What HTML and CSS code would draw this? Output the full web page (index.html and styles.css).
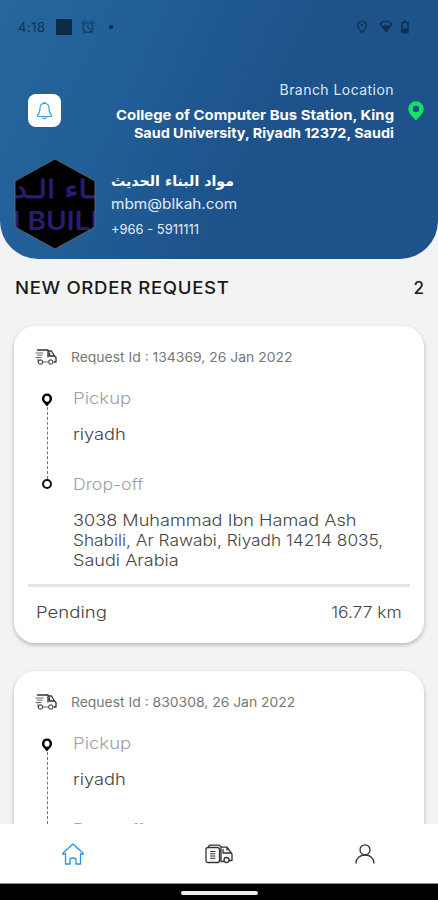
FILE: index.html
```html
<!DOCTYPE html>
<html lang="en">
<head>
<meta charset="utf-8">
<meta name="viewport" content="width=device-width, initial-scale=1">
<title>New order request</title>
<link rel="stylesheet" href="styles.css">
</head>
<body>
<svg class="defs" aria-hidden="true">
  <symbol id="truck" viewBox="0 0 22 18">
    <g fill="none" stroke="currentColor" stroke-linecap="round" stroke-linejoin="round">
      <path stroke-width="1.300" d="M2.500 2H13V9M13 3H16.500L19.500 8L21 9.500V14H19M14.500 5V8H19"/>
      <path stroke-width="1" opacity=".75" d="M1 5H8M2.500 7.200H7M1 9.500H6M3 11V14M8 14H13"/>
      <g stroke-width="1.100" opacity=".8"><circle cx="5.500" cy="14" r="2.100"/><circle cx="15.800" cy="14" r="2.100"/></g>
    </g>
  </symbol>
  <symbol id="pin" viewBox="0 0 12 14">
    <path fill="currentColor" fill-rule="evenodd" d="M6 .5A5 5 0 0 0 .9 5.600C.9 9 4 10.800 6 13.500C8 10.800 11.100 9 11.100 5.600A5 5 0 0 0 6 .5ZM6 2.800C7.600 2.800 8.600 4 8.600 5.700S7.500 8.700 6 8.700S3.400 7.400 3.400 5.700S4.400 2.800 6 2.800Z"/>
  </symbol>
</svg>
<div class="app">
  <header class="header">
    <div class="status">
      <span class="time">4:18</span>
      <span class="square"></span>
      <svg class="alarm" viewBox="0 0 14 14" fill="none" stroke="currentColor" stroke-width="1.200" stroke-linecap="round"><circle cx="7" cy="7.500" r="5"/><path d="M1 3.500L3.500 1M13 3.500L10.500 1M7 5V8L9 9M3.500 11.500L2.500 13M10.500 11.500L11.500 13"/></svg>
      <span class="dot"></span>
      <svg class="loc" viewBox="0 0 10 14" fill="none" stroke="currentColor" stroke-width="1.200"><path d="M5 1C2.500 1 .8 2.700 .8 5C.8 8 5 12.500 5 12.500S9.200 8 9.200 5C9.200 2.700 7.500 1 5 1Z"/><circle cx="5" cy="5" r="1.300" fill="currentColor" stroke="none"/></svg>
      <svg class="wifi" viewBox="0 0 14 13"><path d="M1 4C4 .6 10 .6 13 4L7 11.500Z" fill="none" stroke="currentColor" stroke-width="1.300"/><path d="M3 6.400Q7 4 11 6.400L7 11.800Z" fill="currentColor"/></svg>
      <svg class="battery" viewBox="0 0 8 14"><path d="M1 2.500H7V12.500H1Z" fill="none" stroke="currentColor" stroke-width="1.400"/><path d="M2.500 .5H5.500V2.500H2.500ZM1 8.500H7V13H1Z" fill="currentColor"/></svg>
    </div>
    <div class="branch">
      <span class="bell"><svg viewBox="0 0 18 20" fill="none" stroke="#3c9ddb" stroke-width="1.200" stroke-linecap="round" stroke-linejoin="round"><path d="M9 2.500C5.500 2.500 4.200 5 4.200 7.800C4.200 11.500 3.700 13 1.500 15C1 16 1.500 16.300 2.500 16.300H15.500C16.500 16.300 17 16 16.500 15C14.300 13 13.800 11.500 13.800 7.800C13.800 5 12.500 2.500 9 2.500Z"/><path d="M8.300 1.500H9.700M7 17.500Q9 20 11 17.500"/></svg></span>
      <div class="where">
        <div class="label">Branch Location</div>
        <div class="place"><span class="p1">College of Computer Bus Station, King</span><br><span class="p2">Saud University, Riyadh 12372, Saudi</span></div>
      </div>
      <svg class="green" viewBox="0 0 16 20"><path fill="#16e163" fill-rule="evenodd" d="M8 .3A7.600 7.600 0 0 0 .3 8C.3 13 5.500 16 8 19.700C10.500 16 15.700 13 15.700 8A7.600 7.600 0 0 0 8 .3ZM8 4.700A3.200 3.200 0 1 1 8 11.100A3.200 3.200 0 1 1 8 4.700Z"/></svg>
    </div>
    <div class="company">
      <svg class="logo" viewBox="0 0 82 92">
        <defs><clipPath id="hex"><path d="M41 1L81 23V69L41 91L1 69V23Z"/></clipPath></defs>
        <path d="M41 1L81 23V69L41 91L1 69V23Z" fill="#000"/>
        <g clip-path="url(#hex)" fill="#2b1c72">
          <text class="logo-ar" x="41" y="40" text-anchor="middle" textLength="82" lengthAdjust="spacingAndGlyphs">ـاء الـد</text>
          <text class="logo-en" x="-15" y="72" textLength="112" lengthAdjust="spacingAndGlyphs">N BUILD</text>
        </g>
        <path d="M41 1L81 23V69L41 91L1 69V23Z" fill="none" stroke="#5a6470" stroke-width="1"/>
      </svg>
      <div class="contact">
        <div class="name" lang="ar" dir="rtl">مواد البناء الحديث</div>
        <div class="mail">mbm@blkah.com</div>
        <div class="phone">+966 - 5911111</div>
      </div>
    </div>
  </header>
  <main class="content">
    <div class="title"><h1>NEW ORDER REQUEST</h1><span>2</span></div>
    <article class="card">
      <div class="request"><svg class="truck"><use href="#truck"/></svg><span>Request Id : 134369, 26 Jan 2022</span></div>
      <div class="route">
        <div class="track"><svg class="pin"><use href="#pin"/></svg><i class="line"></i><i class="end"></i></div>
        <div class="stops">
          <div class="kind k1">Pickup</div>
          <div class="addr r">riyadh</div>
          <div class="kind k2">Drop-off</div>
          <div class="addr"><span class="a1">3038 Muhammad Ibn Hamad Ash</span><br><span class="a2">Shabili, Ar Rawabi, Riyadh 14214 8035,</span><br><span class="a3">Saudi Arabia</span></div>
        </div>
      </div>
      <div class="foot"><span class="state">Pending</span><span class="km">16.77 km</span></div>
    </article>
    <article class="card">
      <div class="request"><svg class="truck"><use href="#truck"/></svg><span>Request Id : 830308, 26 Jan 2022</span></div>
      <div class="route">
        <div class="track"><svg class="pin"><use href="#pin"/></svg><i class="line"></i><i class="end"></i></div>
        <div class="stops">
          <div class="kind k1">Pickup</div>
          <div class="addr r">riyadh</div>
          <div class="kind k2">Drop-off</div>
        </div>
      </div>
    </article>
  </main>
  <nav class="nav">
    <a class="tab on"><svg class="home" viewBox="0 0 22 22" fill="none" stroke="currentColor" stroke-width="1.300" stroke-linejoin="round" stroke-linecap="round"><path d="M3.500 10.500L1 11.500V10L11 1L21 10V11.500L18.500 10.500V21H14V16.500C14 14.500 8 14.500 8 16.500V21H3.500Z"/></svg></a>
    <a class="tab"><svg class="orders" viewBox="0 0 28 20" fill="none" stroke="currentColor" stroke-width="1.300" stroke-linejoin="round" stroke-linecap="round"><path d="M3 3.500H12.500Q14.500 3.500 14.500 5.500V16.500Q14.500 18.500 12.500 18.500H3Q1 18.500 1 16.500V5.500Q1 3.500 3 3.500L4.500 1.200H14.500L16 3V17.500H18.500M16 3.200H22L25.500 8L27 10V16.500H24.500M18 5.500V9H25.500M22 3.500V6"/><path stroke-width="1.100" d="M5.500 7.500H10M5.500 9.800H10M5.500 12H10M5.500 14.200H10"/><circle cx="21.500" cy="16" r="2.500"/></svg></a>
    <a class="tab"><svg class="user" viewBox="0 0 20 20" fill="none" stroke="currentColor" stroke-width="1.300" stroke-linecap="round"><circle cx="10" cy="5.800" r="5"/><path d="M1 19C1 14.500 5 11 10 11S19 14.500 19 19"/></svg></a>
  </nav>
  <div class="system"><span></span></div>
</div>
</body>
</html>
```

FILE: styles.css
```css
* { box-sizing: border-box; }
body { margin: 0; font-family: Inter, "Noto Sans", sans-serif; white-space: nowrap; }
.defs { display: none; }
.app { width: 438px; height: 900px; display: flex; flex-direction: column; overflow: hidden; background: #f3f3f3; }
svg { display: block; flex: none; overflow: visible; }
.header { height: 259px; flex: none; border-radius: 0 0 38px 38px; background: linear-gradient(115deg, #25669f 0%, #225e97 30%, #1d528a 58%, #1d528a 100%); color: #fff; }

.status { height: 53px; padding: 0 29px 0 18px; display: flex; align-items: center; color: #10304f; }
.time { width: 38px; font-size: 13px; letter-spacing: .5px; }
.square { width: 16px; height: 16px; background: #0d2a44; }
.alarm { width: 14px; height: 14px; margin-left: 9px; opacity: .8; }
.dot { width: 4px; height: 4px; margin-left: 14px; border-radius: 50%; background: #0d2540; }
.loc { width: 10px; height: 14px; margin-left: auto; }
.wifi { width: 14px; height: 13px; margin-left: 12px; }
.battery { width: 8px; height: 14px; margin-left: 8px; }

.branch { height: 95px; display: flex; padding: 0 14px 0 28px; }
.bell { width: 33px; height: 33px; margin-top: 41px; flex: none; display: grid; place-items: center; border-radius: 8px; background: #fff; }
.bell svg { width: 17px; height: 19px; }
.where { flex: 1; padding-top: 27px; text-align: right; }
.label { height: 27px; line-height: 20px; font-size: 14px; color: #dce7f4; letter-spacing: .45px; }
.place { line-height: 17.500px; font-size: 13.500px; font-weight: 700; }
.green { width: 16px; height: 20px; margin: 48px 0 0 14px; }

/* Wide letterforms */
.p1, .p2, h1, .mail, .phone, .request span, .k1, .k2, .r, .a1, .a2, .a3, .state, .km { display: inline-block; transform-origin: 0 50%; }
.p1, .p2, .km { transform-origin: 100% 50%; }
.p1 { transform: scaleX(1.103); }
.p2 { transform: scaleX(1.066); }
h1 { transform: scaleX(1.093); }
.request span { transform: scaleX(1.07); }
.a1 { transform: scaleX(1.17); }
.a2 { transform: scaleX(1.115); }
.a3 { transform: scaleX(1.165); }
.state { transform: scaleX(1.16); }
.km { transform: scaleX(1.09); }

.company { display: flex; padding: 9px 0 0 14px; }
.logo { width: 82px; height: 94px; }
.logo-ar { font-family: "DejaVu Sans", sans-serif; font-size: 25px; stroke: #2b1c72; stroke-width: .8px; }
.logo-en { font-family: Inter, sans-serif; font-size: 25px; font-weight: 600; }
.contact { padding: 14px 0 0 15px; color: #e4edf7; display: flex; flex-direction: column; align-items: flex-start; }
.name { height: 20px; font: 700 14.200px/20px "DejaVu Sans", sans-serif; color: #fff; }
.mail { margin-top: 2px; line-height: 22px; font-size: 14px; transform: scaleX(1.096); }
.phone { margin-top: 3px; line-height: 22px; font-size: 13.500px; transform: scaleX(.957); }

.content { height: 565px; flex: none; overflow: hidden; padding: 0 14px; }
.title { height: 67px; padding: 0 0 10px 1px; display: flex; align-items: center; justify-content: space-between; color: #191919; font-size: 17px; font-weight: 500; }
h1 { margin: 0; font: inherit; letter-spacing: .6px; }
.card { height: 317px; margin-bottom: 28px; border-radius: 21px; background: #fff; box-shadow: 0 2px 4px rgba(0,0,0,.25); }
.request { height: 62px; padding-left: 21px; display: flex; align-items: center; font-size: 13px; color: #777; }
.truck { width: 22px; height: 18px; margin-right: 14px; color: #303030; }
.route { height: 196px; display: flex; }
.track { width: 59px; padding: 5px 0 0 27px; display: flex; flex-direction: column; }
.pin { width: 12px; height: 14px; color: #000; }
.line { height: 72px; margin-left: 5.500px; border-left: 1px dashed #777; }
.end { width: 10px; height: 10px; margin-left: 1px; border: 2.500px solid #111; border-radius: 50%; }
.stops { display: flex; flex-direction: column; align-items: flex-start; }
.kind { line-height: 20px; font-size: 16px; font-weight: 300; color: #a0a0a0; }
.k1 { transform: scaleX(1.16); }
.k2 { margin-bottom: 17px; transform: scaleX(1.11); }
.addr { line-height: 20.300px; font-size: 15.500px; font-weight: 300; color: #444; }
.r { margin: 16.500px 0 29px; transform: scaleX(1.18); }
.foot { height: 55px; margin: 0 14px; padding: 0 8px 3px; border-top: 3px solid #e5e5e5; display: flex; align-items: center; justify-content: space-between; font-size: 16px; font-weight: 300; color: #444; }

.nav { height: 59px; flex: none; display: grid; grid-template-columns: repeat(3, 1fr); background: #fff; color: #333; }
.tab { display: grid; place-items: center; }
.on { color: #2694df; }
.home { width: 22px; height: 22px; }
.orders { width: 28px; height: 20px; }
.user { width: 20px; height: 20px; }
.system { height: 17px; flex: none; padding-top: 7px; border-top: 1px solid #888; background: #000; display: flex; justify-content: center; }
.system span { width: 77px; height: 4px; border-radius: 2px; background: #eee; }
```
